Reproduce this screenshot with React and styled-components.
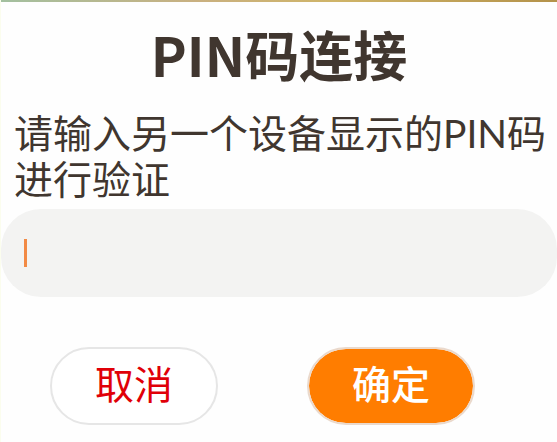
import React from 'react';
import styled, { createGlobalStyle } from 'styled-components';

const GlobalStyle = createGlobalStyle`
  *, *::before, *::after { box-sizing: border-box; }
  body {
    margin: 0;
    background: #fefefe;
    color: #40362f;
    font-family: "Noto Sans CJK SC", sans-serif;
  }
`;

const Dialog = styled.main`
  display: flex;
  flex-direction: column;
  min-height: 100vh;
  border-left: 1px solid #fbfdee;
`;

const TopEdge = styled.div`
  height: 2px;
  background: linear-gradient(90deg, #a3c0a0, #c9b080 35%, #cfb468 60%, #b4924a);
`;

const Title = styled.h1`
  margin: 22px 0 0;
  font-size: 54px;
  line-height: 60px;
  font-weight: 700;
  text-align: center;
`;

const Message = styled.label`
  margin-top: 26px;
  padding: 0 8px 0 13px;
  font-family: Lato, "Noto Sans CJK SC", sans-serif;
  font-size: 39px;
  line-height: 46px;
`;

const PinField = styled.div`
  position: relative;
  display: flex;
  margin-top: 7px;
`;

const PinInput = styled.input`
  width: 100%;
  height: 88px;
  padding: 0 24px;
  border: 0;
  border-radius: 40px;
  outline: 0;
  background: #f3f3f2;
  color: inherit;
  caret-color: transparent;
  font: inherit;
  font-size: 28px;

  &:not(:placeholder-shown) { caret-color: #f28a45; }
`;

const Caret = styled.span`
  position: absolute;
  top: 30px;
  left: 23px;
  width: 3px;
  height: 28px;
  background: #f28a45;
  pointer-events: none;

  ${PinInput}:not(:placeholder-shown) + & { display: none; }
`;

const Actions = styled.div`
  display: flex;
  justify-content: space-between;
  margin-top: 50px;
  padding: 0 82px 0 49px;
`;

const ActionButton = styled.button`
  width: 168px;
  height: 78px;
  padding: 0 0 8px;
  border: 2px solid ${({ $primary }) => ($primary ? '#ead9cc' : '#e6e6e6')};
  border-radius: 39px;
  background: ${({ $primary }) => ($primary ? '#ff7d00' : '#ffffff')};
  background-clip: padding-box;
  color: ${({ $primary }) => ($primary ? '#ffffff' : '#e00008')};
  font-family: inherit;
  font-size: 39px;
  font-weight: ${({ $primary }) => ($primary ? 500 : 400)};
  line-height: 46px;
`;

export default function App() {
  return (
    <>
      <GlobalStyle />
      <Dialog>
        <TopEdge />
        <Title>PIN码连接</Title>
        <Message htmlFor="pin">请输入另一个设备显示的PIN码进行验证</Message>
        <PinField>
          <PinInput id="pin" type="text" inputMode="numeric" placeholder=" " autoFocus />
          <Caret />
        </PinField>
        <Actions>
          <ActionButton type="button">取消</ActionButton>
          <ActionButton type="button" $primary>确定</ActionButton>
        </Actions>
      </Dialog>
    </>
  );
}
